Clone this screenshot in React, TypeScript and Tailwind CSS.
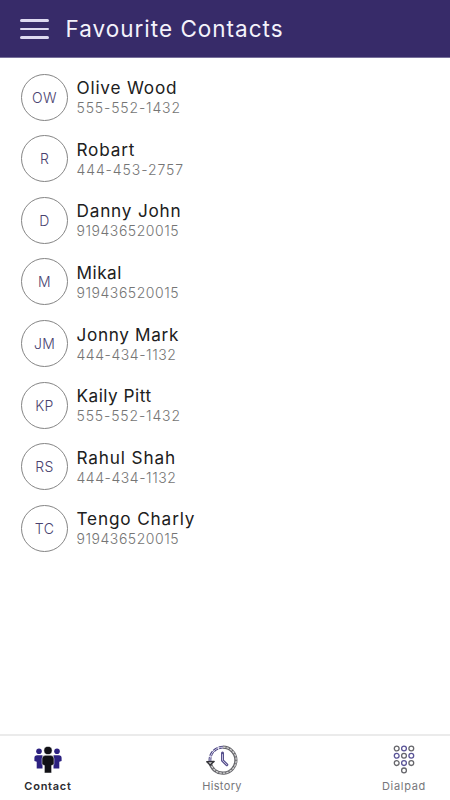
type Contact = {
  initials: string;
  name: string;
  phone: string;
  nameTracking: string;
  phoneTracking: string;
};

const contacts: Contact[] = [
  { initials: "OW", name: "Olive Wood", phone: "555-552-1432", nameTracking: "tracking-[0.8px]", phoneTracking: "tracking-[0.85px]" },
  { initials: "R", name: "Robart", phone: "444-453-2757", nameTracking: "tracking-[0.8px]", phoneTracking: "tracking-[0.9px]" },
  { initials: "D", name: "Danny John", phone: "919436520015", nameTracking: "tracking-[0.8px]", phoneTracking: "tracking-[0.55px]" },
  { initials: "M", name: "Mikal", phone: "919436520015", nameTracking: "tracking-[0.5px]", phoneTracking: "tracking-[0.55px]" },
  { initials: "JM", name: "Jonny Mark", phone: "444-434-1132", nameTracking: "tracking-[0.65px]", phoneTracking: "tracking-[0.55px]" },
  { initials: "KP", name: "Kaily Pitt", phone: "555-552-1432", nameTracking: "tracking-[0.5px]", phoneTracking: "tracking-[0.85px]" },
  { initials: "RS", name: "Rahul Shah", phone: "444-434-1132", nameTracking: "tracking-[0.85px]", phoneTracking: "tracking-[0.55px]" },
  { initials: "TC", name: "Tengo Charly", phone: "919436520015", nameTracking: "tracking-[0.85px]", phoneTracking: "tracking-[0.55px]" },
];

function PeopleIcon() {
  return (
    <svg width="28" height="28" viewBox="0 0 28 28">
      <g fill="#2c2180">
        <circle cx="5" cy="5.2" r="2.8" />
        <circle cx="23" cy="5.2" r="2.8" />
        <path d="M3.2 9.3h5.300v13.200H2.700v-6.800L.4 15v-2.900a2.800 2.800 0 0 1 2.800-2.800Z" />
        <path d="M24.800 9.300h-5.300v13.200h5.800v-6.800l2.300-.7v-2.900a2.800 2.800 0 0 0-2.800-2.800Z" />
      </g>
      <g fill="#111116" stroke="#fff" strokeWidth=".5">
        <circle cx="14" cy="4.500" r="4.100" />
        <path d="M11.500 9.300h5a3.500 3.500 0 0 1 3.500 3.500v5.700l-2.400 1v7.500h-7.200v-7.500l-2.400-1v-5.700a3.500 3.500 0 0 1 3.500-3.500Z" />
      </g>
    </svg>
  );
}

function HistoryIcon() {
  return (
    <svg width="32" height="30" viewBox="0 0 32 30" fill="none">
      <path d="M4 17A13 13 0 1 0 17 2.200" stroke="#65656a" strokeWidth="3.200" />
      <path d="M4 17A13 13 0 0 1 17 2.200" stroke="#4b4580" strokeWidth="2.800" strokeDasharray="5 1" />
      <path d="M5.500 21A13 13 0 1 0 17 2.200" stroke="#d8d8d8" strokeWidth="1.200" strokeDasharray="2.500 1" />
      <path d="M4 16.500A13 13 0 0 1 17 2.200" stroke="#d5d1eb" strokeWidth="1" />
      <path d="m.8 16.800 3.300 3.200 4-3.600Z" fill="#ddd" stroke="#333338" strokeWidth="1.400" strokeLinejoin="round" />
      <path d="M16.500 8v7.500l4.300 4.200" stroke="#57518d" strokeWidth="3" strokeLinecap="round" strokeLinejoin="round" />
      <path d="M16.500 9.500v6l4.300 4.200" stroke="#c5c1dd" strokeWidth="1" strokeLinecap="round" />
    </svg>
  );
}

function DialpadIcon() {
  return (
    <svg width="22" height="30" viewBox="0 0 22 30" fill="none" strokeWidth="1.300">
      {[3.500, 10.800, 18.100].map((y, row) =>
        [3.700, 11, 18.300].map((x, col) => (
          <circle key={`${row}-${col}`} cx={x} cy={y} r="2.400" stroke={(row + col) % 2 ? "#5a5497" : "#66666b"} />
        )),
      )}
      <circle cx="11" cy="25.400" r="2.400" stroke="#66666b" />
    </svg>
  );
}

export default function App() {
  return (
    <div className="flex h-[800px] w-[450px] flex-col overflow-hidden bg-white font-['Inter','Liberation_Sans',sans-serif]">
      <header className="flex h-[58px] shrink-0 items-center border-b border-[#77709b] bg-[#372b69] pl-5 text-[#f4f2fb]">
        <button aria-label="Menu" className="mt-px flex w-[29px] flex-col gap-[6px]">
          <span className="h-[2.500px] rounded-full bg-[#dedaf1]" />
          <span className="h-[2.500px] rounded-full bg-[#dedaf1]" />
          <span className="h-[2.500px] rounded-full bg-[#dedaf1]" />
        </button>
        <h1 className="ml-[16.500px] text-[22.500px] leading-7 tracking-[1px] whitespace-nowrap">Favourite Contacts</h1>
      </header>

      <main className="grow pt-[8.400px] pl-[21px]">
        {contacts.map((c) => (
          <div key={c.name} className="flex h-[61.600px] items-center">
            <div className="flex size-[47px] shrink-0 items-center justify-center rounded-full border border-[#858585] text-[14px] font-light tracking-[0.300px] text-[#49426f]">
              {c.initials}
            </div>
            <div className="ml-[8.500px] pt-px whitespace-nowrap">
              <div className={`text-[17.200px] leading-[20px] text-[#202020] ${c.nameTracking}`}>{c.name}</div>
              <div className={`text-[14px] leading-[19px] font-light text-[#757575] ${c.phoneTracking}`}>{c.phone}</div>
            </div>
          </div>
        ))}
      </main>

      <nav className="flex h-[66px] shrink-0 justify-between border-t-2 border-[#ebebeb] pt-[7px] pr-[24px] pl-[24px] text-[11px] leading-[14px] text-[#77777b]">
        <div className="flex w-[48px] flex-col items-center">
          <div className="flex h-[36px] items-start pt-[3px]"><PeopleIcon /></div>
          <span className="font-semibold tracking-[0.750px] text-[#2b2b2f]">Contact</span>
        </div>
        <div className="mr-[10px] flex w-[48px] flex-col items-center">
          <div className="flex h-[36px] items-start pt-[2px]"><HistoryIcon /></div>
          <span className="tracking-[0.350px]">History</span>
        </div>
        <div className="flex w-[44px] flex-col items-center">
          <div className="flex h-[36px] items-start pt-[2px]"><DialpadIcon /></div>
          <span className="tracking-[0.700px]">Dialpad</span>
        </div>
      </nav>
    </div>
  );
}
